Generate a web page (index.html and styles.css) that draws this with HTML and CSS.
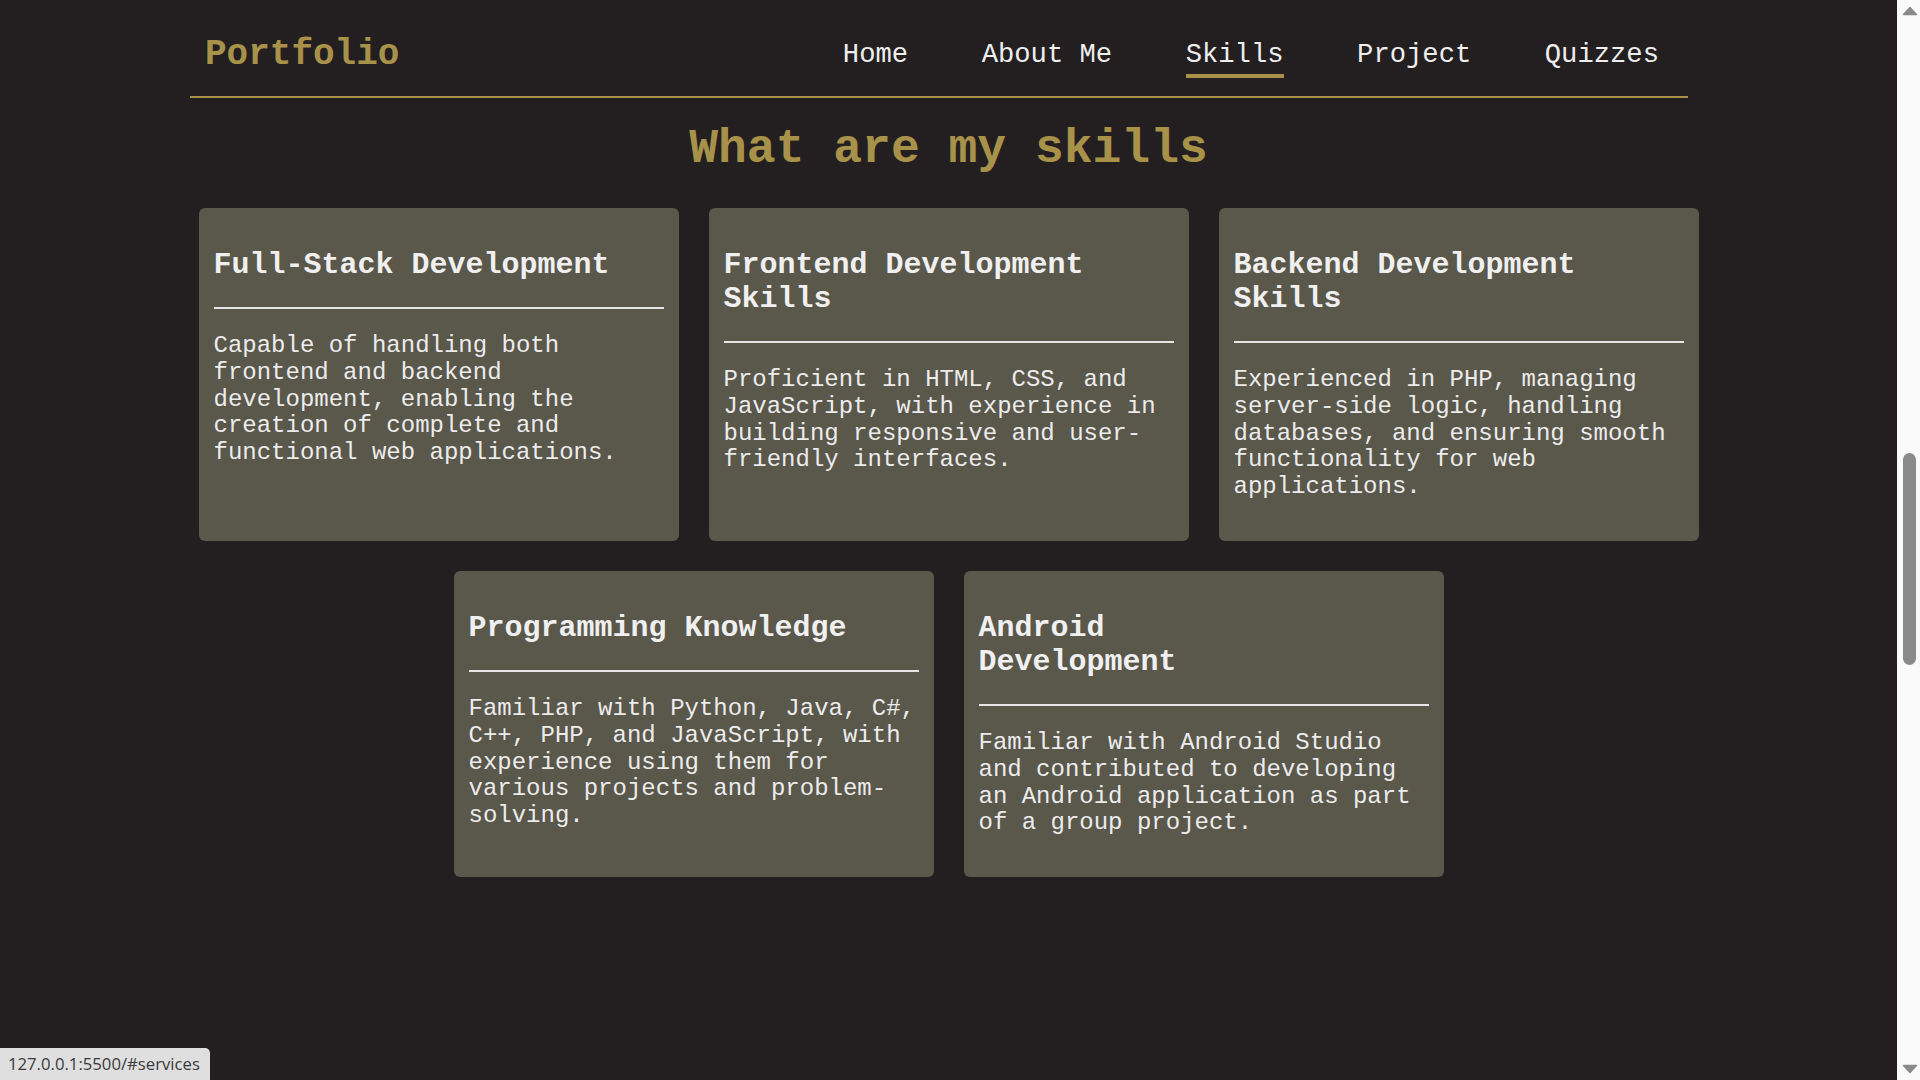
FILE: index.html
```html
<!DOCTYPE html>
<html lang="en">
<head>
<meta charset="utf-8">
<title>Portfolio</title>
<link rel="stylesheet" href="styles.css">
</head>
<body>
<div class="page">
  <header class="site-header">
    <div class="logo">Portfolio</div>
    <nav class="nav">
      <a href="#home" class="nav-link">Home</a>
      <a href="#about" class="nav-link">About Me</a>
      <a href="#services" class="nav-link active">Skills</a>
      <a href="#project" class="nav-link">Project</a>
      <a href="#quizzes" class="nav-link">Quizzes</a>
    </nav>
  </header>

  <section class="skills-section" id="services">
    <h2 class="section-title">What are my skills</h2>
    <div class="cards">
      <div class="card">
        <h3 class="card-title">Full-Stack Development</h3>
        <hr class="card-rule">
        <p class="card-text">Capable of handling both frontend and backend development, enabling the creation of complete and functional web applications.</p>
      </div>
      <div class="card">
        <h3 class="card-title">Frontend Development Skills</h3>
        <hr class="card-rule">
        <p class="card-text">Proficient in HTML, CSS, and JavaScript, with experience in building responsive and user-friendly interfaces.</p>
      </div>
      <div class="card">
        <h3 class="card-title">Backend Development Skills</h3>
        <hr class="card-rule">
        <p class="card-text">Experienced in PHP, managing server-side logic, handling databases, and ensuring smooth functionality for web applications.</p>
      </div>
      <div class="card">
        <h3 class="card-title">Programming Knowledge</h3>
        <hr class="card-rule">
        <p class="card-text">Familiar with Python, Java, C#, C++, PHP, and JavaScript, with experience using them for various projects and problem-solving.</p>
      </div>
      <div class="card">
        <h3 class="card-title">Android<br>Development</h3>
        <hr class="card-rule">
        <p class="card-text">Familiar with Android Studio and contributed to developing an Android application as part of a group project.</p>
      </div>
    </div>
  </section>
</div>

<div class="status-bar">127.0.0.1:5500/#services</div>

<div class="fake-scrollbar">
  <svg class="sb-arrow sb-up" width="16" height="10" viewBox="0 0 16 10"><polygon points="8,1.5 14.5,8.5 1.5,8.5" fill="#8a8a8a" stroke="#8a8a8a" stroke-width="1.5" stroke-linejoin="round"/></svg>
  <div class="sb-thumb"></div>
  <div class="sb-space"></div>
  <svg class="sb-arrow sb-down" width="16" height="10" viewBox="0 0 16 10"><polygon points="1.5,1.5 14.5,1.5 8,8.5" fill="#8a8a8a" stroke="#8a8a8a" stroke-width="1.5" stroke-linejoin="round"/></svg>
</div>
</body>
</html>
```

FILE: styles.css
```css
* {
  box-sizing: border-box;
}

html, body {
  margin: 0;
  padding: 0;
  background: #231f20;
  overflow: hidden;
}

body {
  height: 1080px;
  font-family: "Liberation Mono", "Courier New", monospace;
  color: #eeeeee;
}

.page {
  width: 1897px;
}

/* Header */
.site-header {
  width: 1498px;
  margin-left: 190px;
  display: flex;
  justify-content: space-between;
  align-items: flex-start;
  padding: 34px 29px 18px 15px;
  border-bottom: 2px solid #a8924a;
}

.logo {
  font-size: 36px;
  font-weight: bold;
  color: #a8924a;
  line-height: 41px;
  white-space: nowrap;
}

.nav {
  display: flex;
  gap: 73.5px;
  margin-top: 5px;
}

.nav-link {
  font-size: 27.2px;
  line-height: 31px;
  color: #eeeeee;
  text-decoration: none;
  white-space: nowrap;
  padding-bottom: 4px;
  border-bottom: 4px solid transparent;
}

.nav-link.active {
  border-bottom-color: #a8924a;
}

/* Section */
.section-title {
  margin: 24px 0 31px;
  text-align: center;
  font-size: 48px;
  line-height: 55px;
  font-weight: bold;
  color: #a8924a;
}

.cards {
  width: 1500px;
  margin: 0 auto;
  display: flex;
  flex-wrap: wrap;
  justify-content: center;
  gap: 30px;
}

.card {
  flex: 0 0 480px;
  background: #5a574b;
  border-radius: 6px;
  padding: 15px;
}

.card-title {
  margin: 25px 0 25px;
  font-size: 30px;
  line-height: 34px;
  font-weight: bold;
  color: #f0f0f0;
}

.card-rule {
  margin: 0;
  height: 0;
  border: 0;
  border-top: 2px solid #e6e6e6;
}

.card-text {
  margin: 24px 0 25px;
  font-size: 24px;
  line-height: 26.8px;
  color: #ececec;
}

/* Browser status bubble */
.status-bar {
  position: fixed;
  left: 0;
  bottom: 0;
  width: 210px;
  height: 32px;
  padding: 6px 0 0 8px;
  background: #dfdfdf;
  border-top-right-radius: 5px;
  font-family: "Open Sans", "Noto Sans", sans-serif;
  font-size: 16.7px;
  line-height: 20px;
  color: #3b3b3b;
  white-space: nowrap;
}

/* Fake scrollbar */
.fake-scrollbar {
  position: fixed;
  top: 0;
  right: 0;
  width: 23px;
  height: 1080px;
  background: #fafafa;
  display: flex;
  flex-direction: column;
  align-items: center;
}

.sb-arrow {
  display: block;
  flex: none;
}

.sb-up {
  margin-top: 6px;
  margin-left: 2px;
}

.sb-thumb {
  margin-top: 437px;
  margin-left: 2px;
  width: 13px;
  height: 212px;
  border-radius: 7px;
  background: #8a8a8a;
  flex: none;
}

.sb-space {
  flex: 1;
}

.sb-down {
  margin-bottom: 6px;
  margin-left: 2px;
}
```
